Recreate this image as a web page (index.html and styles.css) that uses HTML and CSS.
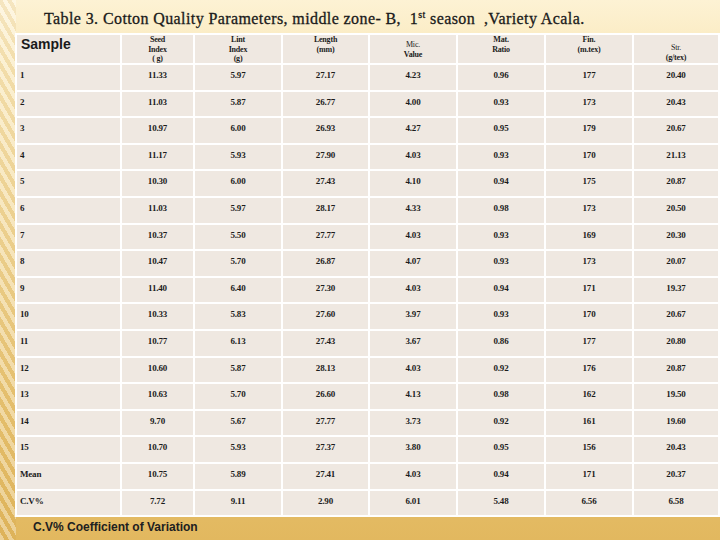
FILE: index.html
```html
<!DOCTYPE html>
<html>
<head>
<meta charset="utf-8">
<link rel="stylesheet" href="styles.css">
</head>
<body>
<div class="slide">
  <div class="stripes"></div>
  <h1 class="title">Table 3. Cotton Quality Parameters, middle zone- B, &nbsp;1<sup>st</sup> season &nbsp;,Variety Acala.</h1>
  <div class="table">
    <div class="cell head first">Sample</div>
    <div class="cell head"><span>Seed</span><span>Index</span><span>( g)</span></div>
    <div class="cell head"><span>Lint</span><span>Index</span><span>(g)</span></div>
    <div class="cell head"><span>Length</span><span>(mm)</span></div>
    <div class="cell head low"><span class="light">Mic.</span><span>Value</span></div>
    <div class="cell head"><span>Mat.</span><span>Ratio</span></div>
    <div class="cell head"><span>Fin.</span><span>(m.tex)</span></div>
    <div class="cell head lower"><span class="light">Str.</span><span>(g/tex)</span></div>

    <div class="cell first">1</div><div class="cell">11.33</div><div class="cell">5.97</div><div class="cell">27.17</div><div class="cell">4.23</div><div class="cell">0.96</div><div class="cell">177</div><div class="cell">20.40</div>
    <div class="cell first">2</div><div class="cell">11.03</div><div class="cell">5.87</div><div class="cell">26.77</div><div class="cell">4.00</div><div class="cell">0.93</div><div class="cell">173</div><div class="cell">20.43</div>
    <div class="cell first">3</div><div class="cell">10.97</div><div class="cell">6.00</div><div class="cell">26.93</div><div class="cell">4.27</div><div class="cell">0.95</div><div class="cell">179</div><div class="cell">20.67</div>
    <div class="cell first">4</div><div class="cell">11.17</div><div class="cell">5.93</div><div class="cell">27.90</div><div class="cell">4.03</div><div class="cell">0.93</div><div class="cell">170</div><div class="cell">21.13</div>
    <div class="cell first">5</div><div class="cell">10.30</div><div class="cell">6.00</div><div class="cell">27.43</div><div class="cell">4.10</div><div class="cell">0.94</div><div class="cell">175</div><div class="cell">20.87</div>
    <div class="cell first">6</div><div class="cell">11.03</div><div class="cell">5.97</div><div class="cell">28.17</div><div class="cell">4.33</div><div class="cell">0.98</div><div class="cell">173</div><div class="cell">20.50</div>
    <div class="cell first">7</div><div class="cell">10.37</div><div class="cell">5.50</div><div class="cell">27.77</div><div class="cell">4.03</div><div class="cell">0.93</div><div class="cell">169</div><div class="cell">20.30</div>
    <div class="cell first">8</div><div class="cell">10.47</div><div class="cell">5.70</div><div class="cell">26.87</div><div class="cell">4.07</div><div class="cell">0.93</div><div class="cell">173</div><div class="cell">20.07</div>
    <div class="cell first">9</div><div class="cell">11.40</div><div class="cell">6.40</div><div class="cell">27.30</div><div class="cell">4.03</div><div class="cell">0.94</div><div class="cell">171</div><div class="cell">19.37</div>
    <div class="cell first">10</div><div class="cell">10.33</div><div class="cell">5.83</div><div class="cell">27.60</div><div class="cell">3.97</div><div class="cell">0.93</div><div class="cell">170</div><div class="cell">20.67</div>
    <div class="cell first">11</div><div class="cell">10.77</div><div class="cell">6.13</div><div class="cell">27.43</div><div class="cell">3.67</div><div class="cell">0.86</div><div class="cell">177</div><div class="cell">20.80</div>
    <div class="cell first">12</div><div class="cell">10.60</div><div class="cell">5.87</div><div class="cell">28.13</div><div class="cell">4.03</div><div class="cell">0.92</div><div class="cell">176</div><div class="cell">20.87</div>
    <div class="cell first">13</div><div class="cell">10.63</div><div class="cell">5.70</div><div class="cell">26.60</div><div class="cell">4.13</div><div class="cell">0.98</div><div class="cell">162</div><div class="cell">19.50</div>
    <div class="cell first">14</div><div class="cell">9.70</div><div class="cell">5.67</div><div class="cell">27.77</div><div class="cell">3.73</div><div class="cell">0.92</div><div class="cell">161</div><div class="cell">19.60</div>
    <div class="cell first">15</div><div class="cell">10.70</div><div class="cell">5.93</div><div class="cell">27.37</div><div class="cell">3.80</div><div class="cell">0.95</div><div class="cell">156</div><div class="cell">20.43</div>
    <div class="cell first">Mean</div><div class="cell">10.75</div><div class="cell">5.89</div><div class="cell">27.41</div><div class="cell">4.03</div><div class="cell">0.94</div><div class="cell">171</div><div class="cell">20.37</div>
    <div class="cell first">C.V%</div><div class="cell">7.72</div><div class="cell">9.11</div><div class="cell">2.90</div><div class="cell">6.01</div><div class="cell">5.48</div><div class="cell">6.56</div><div class="cell">6.58</div>
  </div>
  <p class="note">C.V% Coefficient of Variation</p>
</div>
</body>
</html>
```
FILE: styles.css
```css
html, body {
  margin: 0;
  padding: 0;
}
.slide {
  position: relative;
  width: 720px;
  height: 540px;
  overflow: hidden;
  box-sizing: border-box;
  padding-left: 15px;
  background: linear-gradient(180deg, #fdf2d4 0%, #f9e8ba 12%, #f1d797 45%, #e9c574 75%, #e2b85f 100%);
}
.stripes {
  position: absolute;
  left: 0;
  top: 0;
  width: 16px;
  height: 540px;
  background: repeating-linear-gradient(60deg, rgba(255,255,255,0.35) 0 4px, rgba(190,140,50,0.12) 4px 8px);
}
.title {
  margin: 0;
  height: 33px;
  box-sizing: border-box;
  padding: 11px 0 0 29px;
  font-family: "Liberation Serif", serif;
  font-weight: normal;
  font-size: 16px;
  line-height: 16px;
  letter-spacing: 0.4px;
  -webkit-text-stroke: 0.3px #1a1a1a;
  color: #1a1a1a;
  white-space: nowrap;
  position: relative;
}
.title sup {
  font-size: 10px;
  line-height: 0;
  vertical-align: 6px;
}
.table {
  display: grid;
  grid-template-columns: 103px 71px 86px 85px 86px 86px 86px 84px;
  grid-template-rows: 28px;
  grid-auto-rows: 24.6px;
  gap: 2px;
  padding: 2px;
  background: #ffffff;
  width: 705px;
  box-sizing: border-box;
  position: relative;
}
.cell {
  background: #efe8e1;
  font-family: "Liberation Serif", serif;
  font-weight: bold;
  font-size: 9px;
  line-height: 10px;
  color: #1c1c1c;
  text-align: center;
  padding-top: 5px;
  box-sizing: border-box;
  letter-spacing: -0.2px;
}
.cell.first {
  text-align: left;
  padding-left: 3px;
}
.cell.head {
  display: flex;
  flex-direction: column;
  align-items: center;
  padding-top: 0;
  font-size: 8px;
  line-height: 9.5px;
}
.cell.head.low {
  padding-top: 5px;
}
.cell.head.lower {
  padding-top: 8px;
}
.cell.head .light {
  font-weight: normal;
}
.cell.head.first {
  display: block;
  font-family: "Liberation Sans", Arial, sans-serif;
  font-size: 14px;
  line-height: 16px;
  padding-top: 1px;
  padding-left: 4px;
  letter-spacing: 0;
  color: #1a1a1a;
}
.note {
  margin: 2px 0 0 18px;
  font-family: "Liberation Sans", Arial, sans-serif;
  font-weight: bold;
  font-size: 12px;
  line-height: 16px;
  color: #202020;
  position: relative;
}
```
